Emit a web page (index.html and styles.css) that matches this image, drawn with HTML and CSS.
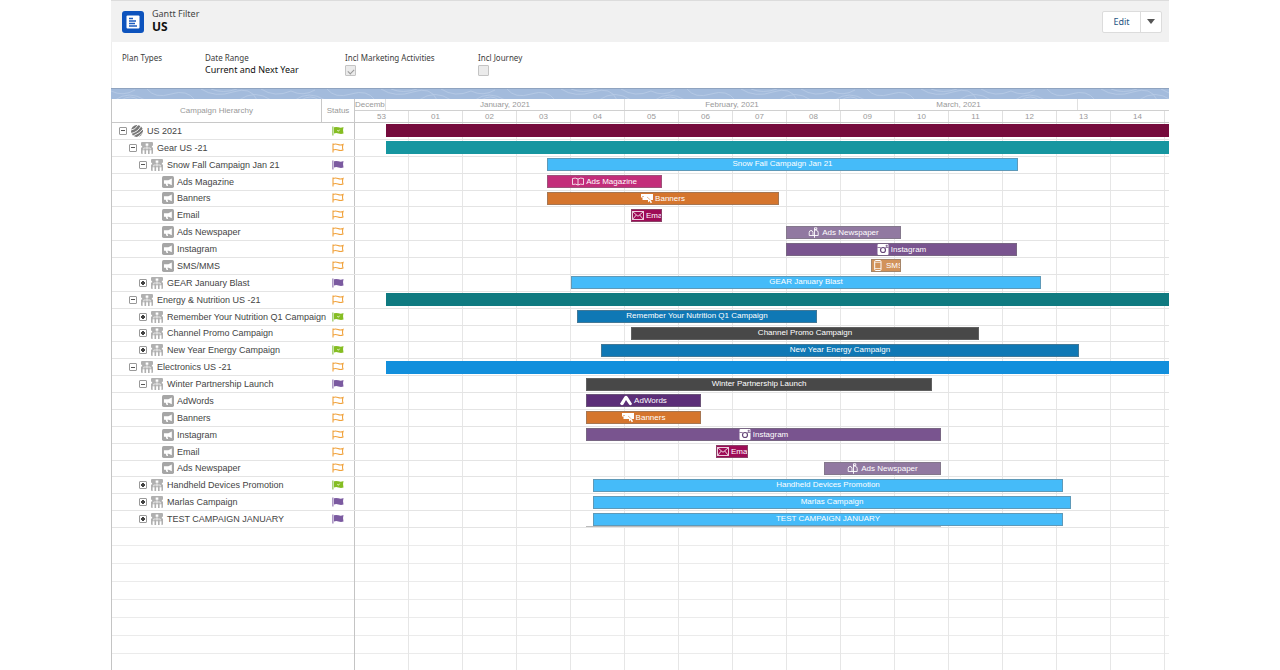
FILE: index.html
```html
<!DOCTYPE html>
<html lang="en">
<head>
<meta charset="utf-8">
<title>Gantt Filter - US</title>
<link rel="stylesheet" href="styles.css">
</head>
<body>
<svg class="sprite" aria-hidden="true">
  <symbol id="globe" viewBox="0 0 12 12"><circle cx="6" cy="6" r="6" fill="#777"/><path d="M0 5Q4 5 7 0M0 8.500Q7 7 10 1M2 11Q9 8 12 4M6 12.500Q10 10 12.500 7" fill="none" stroke="#fff" stroke-width=".9"/></symbol>
  <symbol id="camp" viewBox="0 0 11 11"><rect width="11" height="11" rx="1" fill="#b0b0b0"/><path d="M2.500 7V5.500h6V7M5.500 3.500V7" stroke="#fff" stroke-width=".6" fill="none"/><path d="M1.500 7.500h1.700v3.500H1.500zM4.700 7.500h1.700v3.500H4.700zM7.900 7.500h1.700v3.500H7.900zM4.300 1.300h2.400v2.200H4.300zM0 3.500h1v1.500H0zM10 3.500h1v1.500h-1z" fill="#fff"/></symbol>
  <symbol id="horn" viewBox="0 0 11 11"><rect width="11" height="11" rx="1.500" fill="#a6a6a6"/><path d="M1.800 4h4L9 2.200v6.300L6.200 7H5l.6 2.200H4.200L3.400 7H1.800z" fill="#fff"/></symbol>
  <symbol id="flag-open" viewBox="0 0 12 10"><path d="M1 .5v9M1 1.500Q3.500.5 6 1.500T11 1.500Q10 4 11 7Q8.500 8 6 7T1 7" fill="#fff" stroke="#f0a23c" stroke-width="1.100"/></symbol>
  <symbol id="flag-done" viewBox="0 0 12 10"><path d="M.9 .5v9" stroke="#76b729" stroke-width="1"/><path d="M2 1.300Q4 .5 6.500 1.300T11.500 1Q10.500 4 11.500 7.500Q9 8.300 6.500 7.500T2 7.500z" fill="#85bd22"/><path d="M5.300 4.300L6.400 5.200L7.600 3.700" stroke="#fff" stroke-width=".8" fill="none"/></symbol>
  <symbol id="flag-plan" viewBox="0 0 12 10"><path d="M.9 .5v9" stroke="#7b5aa0" stroke-width="1"/><path d="M2 1.300Q4 .5 6.500 1.300T11.500 1Q10.500 4 11.500 7.500Q9 8.300 6.500 7.500T2 7.500z" fill="#7b5aa0"/></symbol>
  <symbol id="book" viewBox="0 0 12 10"><path d="M.5 2Q3.500 1 6 2.500Q8.500 1 11.500 2v6Q8.500 7 6 8.500Q3.500 7 .5 8zM6 2.500v6" fill="none" stroke="#fff" stroke-width=".8"/></symbol>
  <symbol id="banner" viewBox="0 0 12 10"><path d="M0 .5h12v6H9.800l1.200 2.500L9.700 9.700L8.500 7.500L7 9V6.500H1.500V4H0z" fill="#fff"/><path d="M1 3h2M6 3.500l3.500 3" stroke="#d5752d" stroke-width=".5"/></symbol>
  <symbol id="mail" viewBox="0 0 12 10"><path d="M.5 1h11v8H.5zM.5 1L6 5.800L11.500 1M.5 9L4.300 4.500M11.500 9L7.700 4.500" fill="none" stroke="#fff" stroke-width=".8"/></symbol>
  <symbol id="post" viewBox="0 0 11 11"><path d="M3 3.500H2.500Q.7 3.700.7 5.500v3h9V5.500Q9.700 3.700 8 3.500H7M4.500 8.500V5.500Q4.300 3.500 2.500 3.500M6 10.800V.8h2.300v1.700H6" fill="none" stroke="#fff" stroke-width=".9"/></symbol>
  <symbol id="insta" viewBox="0 0 11 11"><rect width="11" height="11" rx="1" fill="#fff"/><circle cx="5.500" cy="6" r="2.500" fill="none" stroke="#654678" stroke-width="1.200"/><path d="M0 3.500h3.200M7.800 3.500H11M8.500 1.300h1.300v1H8.500z" stroke="#654678" stroke-width=".7" fill="none"/></symbol>
  <symbol id="phone" viewBox="0 0 8 11"><rect x=".7" y=".5" width="6.300" height="10" rx="1" fill="none" stroke="#fff"/><path d="M1 2.300h6M1 8.500h6" stroke="#fff" stroke-width=".7"/></symbol>
  <symbol id="adwords" viewBox="0 0 11 10"><path d="M0 8L4 1.500Q5.500-.3 7 1.500L11 8Q10.500 10 8.500 9L5.500 4.500L3 9Q1 10 0 8z" fill="#fff"/></symbol>
</svg>

<div class="app">
  <header class="page-head">
    <svg class="app-icon" viewBox="0 0 22 22" aria-hidden="true"><rect width="22" height="22" rx="3" fill="#0d53bd"/><rect x="4.500" y="4.500" width="13" height="13" rx="1" fill="#fff"/><path d="M7 7.500h4M7 10h7M7 12.500h6M7 15h8" stroke="#1c5cbf" stroke-width="1.400"/></svg>
    <div class="head-text">
      <p class="kind">Gantt Filter</p>
      <h1>US</h1>
    </div>
    <div class="actions">
      <button type="button" class="edit">Edit</button>
      <button type="button" class="more" aria-label="More actions"><svg viewBox="0 0 8 5" aria-hidden="true"><path d="M0 0h8L4 5z" fill="#555"/></svg></button>
    </div>
  </header>

  <section class="fields">
    <div class="field"><span class="label">Plan Types</span></div>
    <div class="field"><span class="label">Date Range</span><span class="value">Current and Next Year</span></div>
    <div class="field"><label class="label" for="act">Incl Marketing Activities</label><input type="checkbox" id="act" checked disabled></div>
    <div class="field"><label class="label" for="journey">Incl Journey</label><input type="checkbox" id="journey" disabled></div>
  </section>

  <svg class="band" aria-hidden="true">
    <defs><pattern id="contour" width="180" height="11" patternUnits="userSpaceOnUse"><path d="M0 2Q12 8 24 1M4 11Q18 1 34 11M10 11Q20 5 28 11M36 0Q44 10 60 5T84 11M90 0Q104 9 122 3T146 11M100 0Q112 5 126 0M128 11Q144 0 160 11M150 0Q164 9 180 2" fill="none" stroke="#b9cce6" stroke-width=".8"/></pattern></defs>
    <rect width="100%" height="100%" fill="url(#contour)"/>
  </svg>

  <main class="chart">
    <table>
      <thead>
        <tr>
          <th class="h-tree" scope="col">Campaign Hierarchy</th>
          <th class="h-status" scope="col">Status</th>
          <th class="h-time" scope="col">
            <div class="months"><span class="m-dec">Decemb</span><span class="m-jan">January, 2021</span><span class="m-feb">February, 2021</span><span class="m-mar">March, 2021</span></div>
            <div class="weeks"><span>53</span><span>01</span><span>02</span><span>03</span><span>04</span><span>05</span><span>06</span><span>07</span><span>08</span><span>09</span><span>10</span><span>11</span><span>12</span><span>13</span><span>14</span></div>
          </th>
        </tr>
      </thead>
      <tbody>
        <tr><td class="tree l0"><button type="button" class="exp" aria-label="Collapse"></button><svg class="ico"><use href="#globe"/></svg><span>US 2021</span></td><td class="status"><svg><use href="#flag-done"/></svg></td><td class="time"><div class="bar open maroon" style="margin-left:31px"></div></td></tr>
        <tr><td class="tree l1"><button type="button" class="exp" aria-label="Collapse"></button><svg class="ico"><use href="#camp"/></svg><span>Gear US -21</span></td><td class="status"><svg><use href="#flag-open"/></svg></td><td class="time"><div class="bar open teal" style="margin-left:31px"></div></td></tr>
        <tr><td class="tree l2"><button type="button" class="exp" aria-label="Collapse"></button><svg class="ico"><use href="#camp"/></svg><span>Snow Fall Campaign Jan 21</span></td><td class="status"><svg><use href="#flag-plan"/></svg></td><td class="time"><div class="bar parent sky" style="margin-left:192px;width:471px">Snow Fall Campaign Jan 21</div></td></tr>
        <tr><td class="tree l3"><svg class="ico"><use href="#horn"/></svg><span>Ads Magazine</span></td><td class="status"><svg><use href="#flag-open"/></svg></td><td class="time"><div class="bar pink" style="margin-left:192px;width:115px"><svg><use href="#book"/></svg>Ads Magazine</div></td></tr>
        <tr><td class="tree l3"><svg class="ico"><use href="#horn"/></svg><span>Banners</span></td><td class="status"><svg><use href="#flag-open"/></svg></td><td class="time"><div class="bar orange" style="margin-left:192px;width:232px"><svg><use href="#banner"/></svg>Banners</div></td></tr>
        <tr><td class="tree l3"><svg class="ico"><use href="#horn"/></svg><span>Email</span></td><td class="status"><svg><use href="#flag-open"/></svg></td><td class="time"><div class="bar short berry" style="margin-left:276px;width:31px"><svg><use href="#mail"/></svg>Email</div></td></tr>
        <tr><td class="tree l3"><svg class="ico"><use href="#horn"/></svg><span>Ads Newspaper</span></td><td class="status"><svg><use href="#flag-open"/></svg></td><td class="time"><div class="bar lilac" style="margin-left:431px;width:115px"><svg><use href="#post"/></svg>Ads Newspaper</div></td></tr>
        <tr><td class="tree l3"><svg class="ico"><use href="#horn"/></svg><span>Instagram</span></td><td class="status"><svg><use href="#flag-open"/></svg></td><td class="time"><div class="bar violet" style="margin-left:431px;width:231px"><svg><use href="#insta"/></svg>Instagram</div></td></tr>
        <tr><td class="tree l3"><svg class="ico"><use href="#horn"/></svg><span>SMS/MMS</span></td><td class="status"><svg><use href="#flag-open"/></svg></td><td class="time"><div class="bar short tan" style="margin-left:516px;width:30px"><svg><use href="#phone"/></svg>SMS/MMS</div></td></tr>
        <tr><td class="tree l2"><button type="button" class="exp plus" aria-label="Expand"></button><svg class="ico"><use href="#camp"/></svg><span>GEAR January Blast</span></td><td class="status"><svg><use href="#flag-plan"/></svg></td><td class="time"><div class="bar parent sky" style="margin-left:216px;width:470px">GEAR January Blast</div></td></tr>
        <tr><td class="tree l1"><button type="button" class="exp" aria-label="Collapse"></button><svg class="ico"><use href="#camp"/></svg><span>Energy &amp; Nutrition US -21</span></td><td class="status"><svg><use href="#flag-open"/></svg></td><td class="time"><div class="bar open pine" style="margin-left:31px"></div></td></tr>
        <tr><td class="tree l2"><button type="button" class="exp plus" aria-label="Expand"></button><svg class="ico"><use href="#camp"/></svg><span>Remember Your Nutrition Q1 Campaign</span></td><td class="status"><svg><use href="#flag-done"/></svg></td><td class="time"><div class="bar parent blue" style="margin-left:222px;width:240px">Remember Your Nutrition Q1 Campaign</div></td></tr>
        <tr><td class="tree l2"><button type="button" class="exp plus" aria-label="Expand"></button><svg class="ico"><use href="#camp"/></svg><span>Channel Promo Campaign</span></td><td class="status"><svg><use href="#flag-open"/></svg></td><td class="time"><div class="bar parent dark" style="margin-left:276px;width:348px">Channel Promo Campaign</div></td></tr>
        <tr><td class="tree l2"><button type="button" class="exp plus" aria-label="Expand"></button><svg class="ico"><use href="#camp"/></svg><span>New Year Energy Campaign</span></td><td class="status"><svg><use href="#flag-done"/></svg></td><td class="time"><div class="bar parent blue" style="margin-left:246px;width:478px">New Year Energy Campaign</div></td></tr>
        <tr><td class="tree l1"><button type="button" class="exp" aria-label="Collapse"></button><svg class="ico"><use href="#camp"/></svg><span>Electronics US -21</span></td><td class="status"><svg><use href="#flag-open"/></svg></td><td class="time"><div class="bar open azure" style="margin-left:31px"></div></td></tr>
        <tr><td class="tree l2"><button type="button" class="exp" aria-label="Collapse"></button><svg class="ico"><use href="#camp"/></svg><span>Winter Partnership Launch</span></td><td class="status"><svg><use href="#flag-plan"/></svg></td><td class="time"><div class="bar parent dark" style="margin-left:231px;width:346px">Winter Partnership Launch</div></td></tr>
        <tr><td class="tree l3"><svg class="ico"><use href="#horn"/></svg><span>AdWords</span></td><td class="status"><svg><use href="#flag-open"/></svg></td><td class="time"><div class="bar purple" style="margin-left:231px;width:115px"><svg><use href="#adwords"/></svg>AdWords</div></td></tr>
        <tr><td class="tree l3"><svg class="ico"><use href="#horn"/></svg><span>Banners</span></td><td class="status"><svg><use href="#flag-open"/></svg></td><td class="time"><div class="bar orange" style="margin-left:231px;width:115px"><svg><use href="#banner"/></svg>Banners</div></td></tr>
        <tr><td class="tree l3"><svg class="ico"><use href="#horn"/></svg><span>Instagram</span></td><td class="status"><svg><use href="#flag-open"/></svg></td><td class="time"><div class="bar violet" style="margin-left:231px;width:355px"><svg><use href="#insta"/></svg>Instagram</div></td></tr>
        <tr><td class="tree l3"><svg class="ico"><use href="#horn"/></svg><span>Email</span></td><td class="status"><svg><use href="#flag-open"/></svg></td><td class="time"><div class="bar short berry" style="margin-left:361px;width:32px"><svg><use href="#mail"/></svg>Email</div></td></tr>
        <tr><td class="tree l3"><svg class="ico"><use href="#horn"/></svg><span>Ads Newspaper</span></td><td class="status"><svg><use href="#flag-open"/></svg></td><td class="time"><div class="bar lilac" style="margin-left:469px;width:117px"><svg><use href="#post"/></svg>Ads Newspaper</div></td></tr>
        <tr><td class="tree l2"><button type="button" class="exp plus" aria-label="Expand"></button><svg class="ico"><use href="#camp"/></svg><span>Handheld Devices Promotion</span></td><td class="status"><svg><use href="#flag-done"/></svg></td><td class="time"><div class="bar parent sky" style="margin-left:238px;width:470px">Handheld Devices Promotion</div></td></tr>
        <tr><td class="tree l2"><button type="button" class="exp plus" aria-label="Expand"></button><svg class="ico"><use href="#camp"/></svg><span>Marlas Campaign</span></td><td class="status"><svg><use href="#flag-plan"/></svg></td><td class="time"><div class="bar parent sky" style="margin-left:238px;width:478px">Marlas Campaign</div></td></tr>
        <tr><td class="tree l2"><button type="button" class="exp plus" aria-label="Expand"></button><svg class="ico"><use href="#camp"/></svg><span>TEST CAMPAIGN JANUARY</span></td><td class="status"><svg><use href="#flag-plan"/></svg></td><td class="time last"><div class="bar parent sky" style="margin-left:238px;width:470px">TEST CAMPAIGN JANUARY</div></td></tr>
      </tbody>
    </table>
    <div class="empty"><div class="empty-tree"></div><div class="empty-time"></div></div>
  </main>
</div>
</body>
</html>
```

FILE: styles.css
```css
* { box-sizing: border-box; }
body { margin: 0; background: #fff; font-family: "Liberation Sans", Arial, sans-serif; font-size: 9px; color: #444; }
.sprite { position: absolute; width: 0; height: 0; }
.app { display: flex; flex-direction: column; min-height: 100vh; margin: 0 111px; }
button { font: inherit; margin: 0; padding: 0; }

.page-head { display: flex; align-items: center; gap: 8px; height: 42px; padding: 0 7px 0 11px; background: #f1f1f1; border-top: 1px solid #dcdcdc; font-family: "Noto Sans", sans-serif; }
.app-icon { width: 22px; height: 22px; }
.head-text { flex: 1; padding-bottom: 2px; }
.kind { margin: 0; font-size: 9px; line-height: 12px; color: #444; }
h1 { margin: 0; font-size: 12px; line-height: 13px; font-weight: 700; color: #111; }
.actions { display: flex; height: 22px; border: 1px solid #dcdcdc; border-radius: 2px; background: #fff; }
.actions button { border: 0; background: none; display: flex; align-items: center; justify-content: center; }
.actions .edit { width: 37px; color: #1f5582; }
.actions .more { width: 21px; border-left: 1px solid #dcdcdc; }
.more svg { width: 8px; height: 5px; }

.fields { display: grid; grid-template-columns: 83px 140px 133px 1fr; height: 46px; padding: 10px; border-left: 1px solid #eee; font-family: "Noto Sans", sans-serif; }
.field { display: flex; flex-direction: column; align-items: flex-start; white-space: nowrap; }
.label { font-size: 8px; line-height: 12px; color: #3c3c3c; }
.value { font-size: 9px; line-height: 12px; color: #111; }
.field input { appearance: none; width: 11px; height: 11px; margin: 1px 0 0; border: 1px solid #c4c4c4; border-radius: 1px; background: #ebebeb; display: grid; place-items: center; }
.field input:checked::after { content: ""; width: 5px; height: 3px; border-left: 1px solid #999; border-bottom: 1px solid #999; transform: rotate(-45deg); }

.band { display: block; width: 100%; height: 11px; background: #a3bbdc; border-top: 1px solid #8fa3bf; }

.chart { flex: 1; display: flex; flex-direction: column; border-left: 1px solid #c4c4c4; }
table, thead { display: block; }
tr { display: grid; grid-template-columns: 210px 33px 1fr; min-width: 0; }
th { padding: 0; font-size: 8px; font-weight: 400; color: #999; }
thead tr { height: 24px; border-bottom: 1px solid #c8c8c8; }
.h-tree, .h-status { display: flex; align-items: center; justify-content: center; border-right: 1px solid #c8c8c8; }
.h-time { overflow: hidden; }
.months, .weeks { display: flex; height: 12px; line-height: 12px; }
.months { border-bottom: 1px solid #d0d0d0; }
.months span, .weeks span { flex: none; border-right: 1px solid #e0e0e0; overflow: hidden; }
.months .m-dec { width: 31px; text-align: left; }
.m-jan { width: 239px; }
.m-feb { width: 215px; }
.m-mar { width: 238px; }
.weeks span { width: 54px; }

tbody { display: grid; grid-auto-rows: 1fr; height: 405px; }
tbody tr { border-bottom: 1px solid #e4e4e4; }
td { padding: 0; min-width: 0; display: flex; align-items: center; }
.tree { gap: 4px; white-space: nowrap; }
.l0 { padding-left: 7px; }
.l1 { padding-left: 17px; }
.l2 { padding-left: 27px; }
.tree.l3 { padding-left: 50px; gap: 3px; }
.ico { flex: none; width: 12px; height: 12px; }
.exp { flex: none; display: grid; place-items: center; width: 8px; height: 8px; padding: 0; border: 1px solid #999; border-radius: 1px; background: linear-gradient(#555, #555) center / 4px 1px no-repeat #fff; }
.exp.plus { background: linear-gradient(#444, #444) center / 4px 2px no-repeat, linear-gradient(#444, #444) center / 2px 4px no-repeat #fff; }
.status { justify-content: center; border-right: 1px solid #c4c4c4; }
.status svg { width: 12px; height: 10px; }
.time, .empty-time { background-image: repeating-linear-gradient(to right, transparent 0 53px, #e6e6e6 53px 54px); }
.time { overflow: hidden; }
.last { position: relative; }
.last::before { content: ""; position: absolute; left: 231px; bottom: 0; width: 355px; height: 1px; background: #bbb; }

.bar { flex: none; display: flex; align-items: center; justify-content: center; gap: 2px; height: 13px; border: 1px solid rgba(120, 120, 120, .5); color: #fff; font-size: 8px; line-height: 11px; white-space: nowrap; overflow: hidden; }
.bar svg { flex: none; width: 12px; height: 11px; }
.parent { padding-bottom: 2px; }
.bar.open { flex: 1; border: 0; }
.short { justify-content: flex-start; }
.maroon { background-color: #750b3c; }
.teal { background-color: #1696a0; }
.sky { background-color: #45bbf9; }
.pink { background-color: #c32d7a; }
.orange { background-color: #d5752d; }
.berry { background-color: #9e0b56; }
.lilac { background-color: #9179a1; }
.violet { background-color: #79548f; }
.tan { background-color: #d2935a; }
.pine { background-color: #0f7a80; }
.blue { background-color: #0f78b5; }
.dark { background-color: #484848; }
.azure { background-color: #128fdc; }
.purple { background-color: #5c2e78; }

.empty { flex: 1; display: grid; grid-template-columns: 243px 1fr; background-image: linear-gradient(to top, #ebebeb 1px, transparent 1px); background-size: 100% 18px; }
.empty-tree { border-right: 1px solid #c4c4c4; }
```
